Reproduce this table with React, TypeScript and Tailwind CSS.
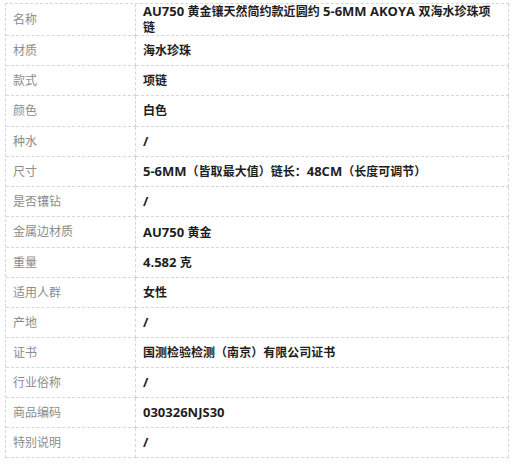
const rows: [string, string][] = [
  ["名称", "AU750 黄金镶天然简约款近圆约 5-6MM AKOYA 双海水珍珠项链"],
  ["材质", "海水珍珠"],
  ["款式", "项链"],
  ["颜色", "白色"],
  ["种水", "/"],
  ["尺寸", "5-6MM（皆取最大值）链长：48CM（长度可调节）"],
  ["是否镶钻", "/"],
  ["金属边材质", "AU750 黄金"],
  ["重量", "4.582 克"],
  ["适用人群", "女性"],
  ["产地", "/"],
  ["证书", "国测检验检测（南京）有限公司证书"],
  ["行业俗称", "/"],
  ["商品编码", "030326NJS30"],
  ["特别说明", "/"],
];

// latin runs sit a touch larger than the CJK ones, like the original page
function Mixed({ text }: { text: string }) {
  const parts = text.match(/[\x20-\x7e]+|[^\x20-\x7e]/g) ?? [];
  return (
    <>
      {parts.map((p, i) =>
        /^[\x20-\x7e]+$/.test(p) ? (
          <span key={i} className="text-[13px]">
            {p}
          </span>
        ) : (
          <span key={i}>{p}</span>
        )
      )}
    </>
  );
}

function rowHeight(i: number) {
  if (i === 0) return "h-[32px]";
  if (i === 3 || i === 7) return "h-[31px]";
  return "h-[30px]";
}

export default function App() {
  return (
    <div
      className="w-[520px] h-[469px] bg-white pl-[5px] pt-[3px]"
      style={{ fontFamily: '"Open Sans", "Noto Sans CJK SC", sans-serif' }}
    >
      <div className="w-[504px] grid grid-cols-[130px_1fr] border-t border-l border-dashed border-[#d6d6d6] text-[12px]">
        {rows.map(([label, value], i) => (
          <div key={label} className="contents">
            <div
              className={`flex items-center pl-[7px] text-[#8c8c8c] border-r border-b border-dashed border-[#d6d6d6] ${rowHeight(i)}`}
            >
              {label}
            </div>
            <div
              className={`flex items-center pl-[7px] pr-[12px] font-bold text-[#1e1e1e] leading-[16px] border-r border-b border-dashed border-[#d6d6d6] ${rowHeight(i)}`}
            >
              <p>
                <Mixed text={value} />
              </p>
            </div>
          </div>
        ))}
      </div>
    </div>
  );
}
